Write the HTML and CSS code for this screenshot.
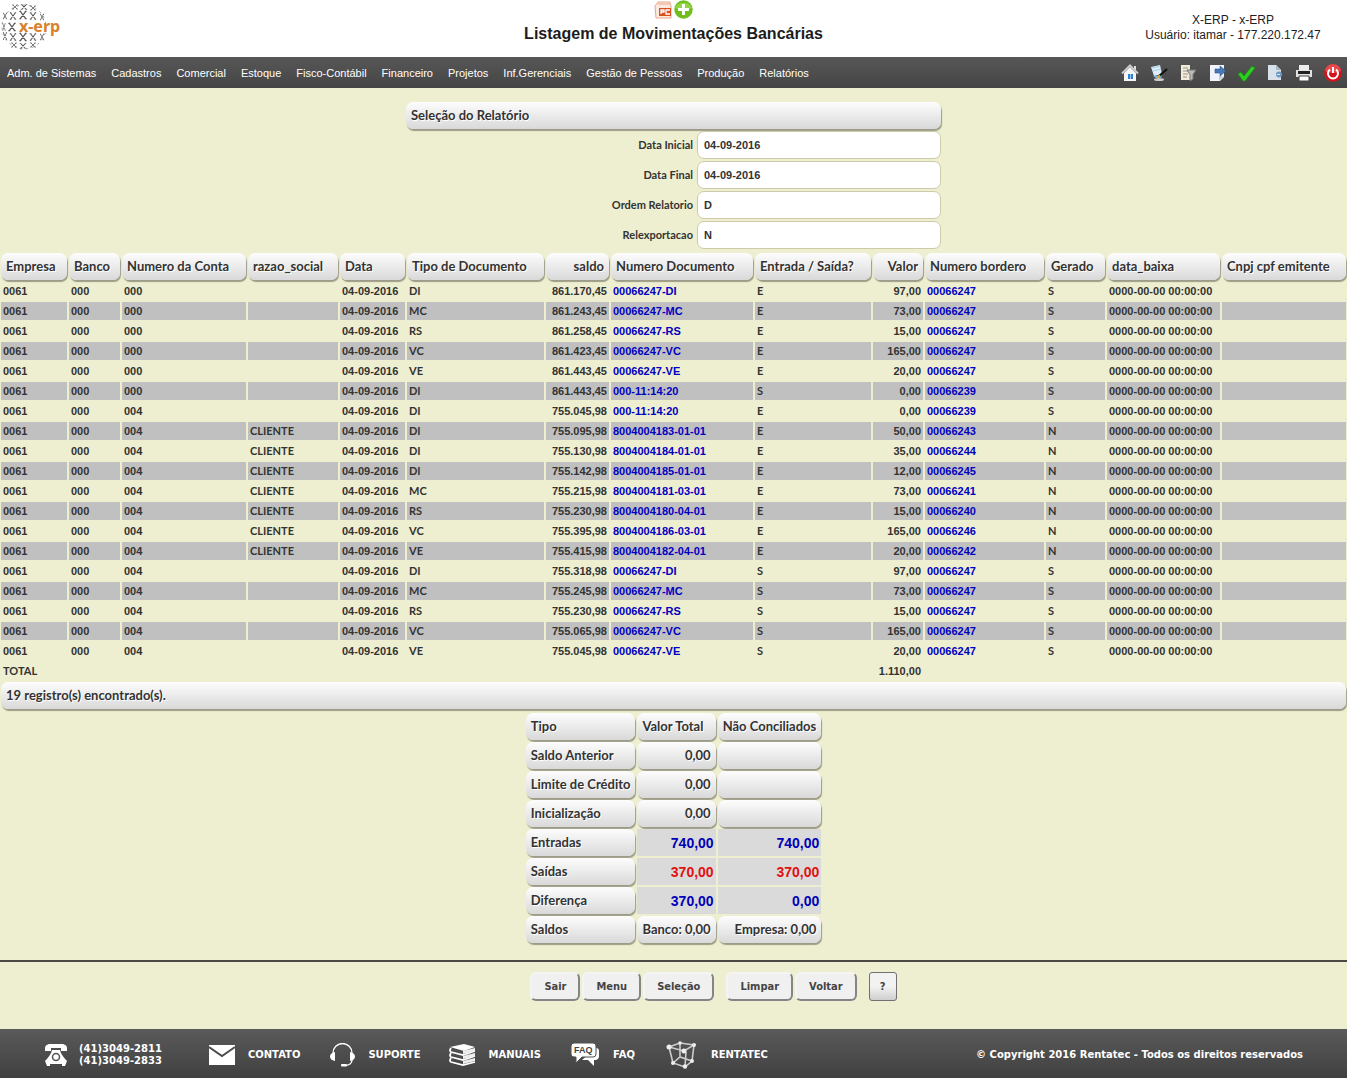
FILE: index.html
```html
<!DOCTYPE html>
<html lang="pt-BR">
<head>
<meta charset="utf-8">
<meta name="viewport" content="width=device-width, initial-scale=1">
<title>Listagem de Movimentações Bancárias</title>
<link rel="stylesheet" href="styles.css">
</head>
<body>
<header class="top">
  <a class="logo" href="#" aria-label="x-erp">
    <svg width="64" height="54" viewBox="0 0 64 54">
      <defs><path id="x" d="M-3-4L3 4M3-4L-3 4M-4-4h2M2-4h2M-4 4h2M2 4h2"/></defs>
      <circle cx="24" cy="27" r="22" fill="none" stroke="#999" stroke-dasharray="2 4"/>
      <g stroke="#555" stroke-width="1.3" fill="none">
        <use href="#x" transform="translate(15 7) scale(.7 .5)"/><use href="#x" transform="translate(24 7) scale(.8 .6)"/><use href="#x" transform="translate(33 8) scale(.7 .5)"/>
        <use href="#x" transform="translate(5 16) scale(.5 .7)"/><use href="#x" transform="translate(13 16) scale(.8)"/><use href="#x" transform="translate(23 15) scale(.9)"/><use href="#x" transform="translate(33 16) scale(.8)"/><use href="#x" transform="translate(42 17) scale(.5 .7)"/>
        <use href="#x" transform="translate(4 27) scale(.4 .8)"/><use href="#x" transform="translate(12 27) scale(.9)"/>
        <use href="#x" transform="translate(5 36) scale(.5 .8)"/><use href="#x" transform="translate(13 37) scale(.8)"/><use href="#x" transform="translate(23 37) scale(.9)"/><use href="#x" transform="translate(33 37) scale(.8)"/><use href="#x" transform="translate(42 37) scale(.5 .7)"/>
        <use href="#x" transform="translate(14 45) scale(.7 .5)"/><use href="#x" transform="translate(23 46) scale(.8 .6)"/><use href="#x" transform="translate(33 45) scale(.7 .5)"/>
      </g>
      <text class="logo-text" x="19" y="32">x-erp</text>
    </svg>
  </a>
  <div class="heading">
    <div class="heading-icons">
      <svg width="19" height="19" viewBox="0 0 19 19"><path d="M2 18L1 6l3-4h12l1 4v12z" fill="#fbe9e0" stroke="#e6a88e"/><path d="M4 3h12v2H4z" fill="#f3c9b6"/><path d="M5 8h12v8H5z" fill="#d9501e"/><path d="M7 14V10h3v2H7m9-2h-4v4h4" fill="none" stroke="#fff" stroke-width="1.3"/></svg>
      <svg width="19" height="19" viewBox="0 0 19 19"><circle cx="9.500" cy="9.500" r="9.200" fill="#6fbe1e"/><path d="M1 8a9 8 0 0 1 17 0q-8 4-17 0z" fill="#93d444"/><path d="M9.500 4v11M4 9.500h11" stroke="#fff" stroke-width="3"/></svg>
    </div>
    <h1>Listagem de Movimentações Bancárias</h1>
  </div>
  <div class="user">X-ERP - x-ERP<br>Usuário: itamar - 177.220.172.47</div>
</header>

<nav class="bar nav">
  <div class="menu">
    <a href="#">Adm. de Sistemas</a><a href="#">Cadastros</a><a href="#">Comercial</a><a href="#">Estoque</a><a href="#">Fisco-Contábil</a><a href="#">Financeiro</a><a href="#">Projetos</a><a href="#">Inf.Gerenciais</a><a href="#">Gestão de Pessoas</a><a href="#">Produção</a><a href="#">Relatórios</a>
  </div>
  <div class="tools">
    <a href="#" aria-label="Início"><svg viewBox="0 0 18 18"><path d="M3 9l6-6 6 6v8H3z" fill="#f5f5f5"/><path d="M13 2h2v5h-2z" fill="#ddd"/><path d="M1 9.500L9 1.500l8 8" fill="none" stroke="#c9c9c9" stroke-width="2"/><path d="M7 10h5v5H7z" fill="#2f7fd0"/><path d="M9.500 10v5" stroke="#9cf"/></svg></a>
    <a href="#" aria-label="Editar"><svg viewBox="0 0 18 18"><path d="M1 3l9-2 2 9-8 2z" fill="#dbeefa"/><path d="M2 4l8-2M3 7l8-2" stroke="#a9cfea"/><path d="M3 12l9-1-1 3H6z" fill="#6db4e4"/><ellipse cx="9" cy="15.500" rx="5" ry="1.500" fill="#ccc"/><path d="M8 13l9-8" stroke="#111" stroke-width="2.200"/><path d="M7 14l3-2.500" stroke="#e2b33c" stroke-width="2"/></svg></a>
    <a href="#" aria-label="Filtrar"><svg viewBox="0 0 18 18"><path d="M2 1h9v15H2z" fill="#f1ecd9"/><path d="M4 4h5M4 7h6M4 10h5M4 13h4" stroke="#9b9480"/><path d="M8 6h9l-3 4.500V15l-3 2v-6.500z" fill="#bbb" stroke="#777"/></svg></a>
    <a href="#" aria-label="Exportar"><svg viewBox="0 0 18 18"><path d="M2 1h14v12l-4 4H2z" fill="#f1f5fb"/><path d="M16 12l-5 5v-5z" fill="#c4cedb"/><path d="M7 5h5V2l6 5-6 5V9H7z" fill="#4878b5" stroke="#2c5590" stroke-width=".6"/></svg></a>
    <a href="#" aria-label="Confirmar"><svg viewBox="0 0 18 18"><path d="M1 10l3-2 3 4L15 2l3 2L8 17H6z" fill="#2bd01e" stroke="#128a10" stroke-width=".6"/></svg></a>
    <a href="#" aria-label="Documento"><svg viewBox="0 0 18 18"><path d="M2 1h8l5 5v10H2z" fill="#d9e1ea"/><path d="M10 1l5 5h-5z" fill="#a9b7c6"/><circle cx="13" cy="10.500" r="3" fill="#6d9ac4"/><path d="M11 10.500h3" stroke="#d7e8f8"/></svg></a>
    <a href="#" aria-label="Imprimir"><svg viewBox="0 0 18 18"><path d="M4 1h10v6H4z" fill="#eee"/><path d="M1 6h16v7H1z" fill="#e2e2e2"/><path d="M3 7h12v3H3z" fill="#222"/><path d="M4 12h10v5H4z" fill="#fff" stroke="#444"/></svg></a>
    <a href="#" aria-label="Sair do sistema"><svg viewBox="0 0 18 18"><circle cx="9" cy="9" r="8.800" fill="#d3131a"/><path d="M1 7a8 7 0 0 1 16 0q-8 4-16 0z" fill="#e8474b"/><path d="M6 5.500a5 5 0 1 0 6 0M9 3v6" fill="none" stroke="#fff" stroke-width="2"/></svg></a>
  </div>
</nav>

<main>
  <form class="filter">
    <h2 class="pill">Seleção do Relatório</h2>
    <div class="field"><label for="di">Data Inicial</label><input id="di" type="text" value="04-09-2016"></div>
    <div class="field"><label for="df">Data Final</label><input id="df" type="text" value="04-09-2016"></div>
    <div class="field"><label for="or">Ordem Relatorio</label><input id="or" type="text" value="D"></div>
    <div class="field"><label for="re">Relexportacao</label><input id="re" type="text" value="N"></div>
  </form>

  <table class="list">
    <colgroup><col class="c66"><col class="c51"><col class="c124"><col class="c90"><col class="c65"><col class="c137"><col class="c63"><col class="c142"><col class="c116"><col class="c50"><col class="c119"><col class="c59"><col class="c113"><col class="c124"></colgroup>
    <thead><tr><th class="pill">Empresa</th><th class="pill">Banco</th><th class="pill">Numero da Conta</th><th class="pill">razao_social</th><th class="pill">Data</th><th class="pill">Tipo de Documento</th><th class="pill">saldo</th><th class="pill">Numero Documento</th><th class="pill">Entrada / Saída?</th><th class="pill">Valor</th><th class="pill">Numero bordero</th><th class="pill">Gerado</th><th class="pill">data_baixa</th><th class="pill">Cnpj cpf emitente</th></tr></thead>
    <tbody>
      <tr><td>0061</td><td>000</td><td>000</td><td></td><td>04-09-2016</td><td>DI</td><td>861.170,45</td><td><a href="#">00066247-DI</a></td><td>E</td><td>97,00</td><td><a href="#">00066247</a></td><td>S</td><td>0000-00-00 00:00:00</td><td></td></tr>
      <tr><td>0061</td><td>000</td><td>000</td><td></td><td>04-09-2016</td><td>MC</td><td>861.243,45</td><td><a href="#">00066247-MC</a></td><td>E</td><td>73,00</td><td><a href="#">00066247</a></td><td>S</td><td>0000-00-00 00:00:00</td><td></td></tr>
      <tr><td>0061</td><td>000</td><td>000</td><td></td><td>04-09-2016</td><td>RS</td><td>861.258,45</td><td><a href="#">00066247-RS</a></td><td>E</td><td>15,00</td><td><a href="#">00066247</a></td><td>S</td><td>0000-00-00 00:00:00</td><td></td></tr>
      <tr><td>0061</td><td>000</td><td>000</td><td></td><td>04-09-2016</td><td>VC</td><td>861.423,45</td><td><a href="#">00066247-VC</a></td><td>E</td><td>165,00</td><td><a href="#">00066247</a></td><td>S</td><td>0000-00-00 00:00:00</td><td></td></tr>
      <tr><td>0061</td><td>000</td><td>000</td><td></td><td>04-09-2016</td><td>VE</td><td>861.443,45</td><td><a href="#">00066247-VE</a></td><td>E</td><td>20,00</td><td><a href="#">00066247</a></td><td>S</td><td>0000-00-00 00:00:00</td><td></td></tr>
      <tr><td>0061</td><td>000</td><td>000</td><td></td><td>04-09-2016</td><td>DI</td><td>861.443,45</td><td><a href="#">000-11:14:20</a></td><td>S</td><td>0,00</td><td><a href="#">00066239</a></td><td>S</td><td>0000-00-00 00:00:00</td><td></td></tr>
      <tr><td>0061</td><td>000</td><td>004</td><td></td><td>04-09-2016</td><td>DI</td><td>755.045,98</td><td><a href="#">000-11:14:20</a></td><td>E</td><td>0,00</td><td><a href="#">00066239</a></td><td>S</td><td>0000-00-00 00:00:00</td><td></td></tr>
      <tr><td>0061</td><td>000</td><td>004</td><td>CLIENTE</td><td>04-09-2016</td><td>DI</td><td>755.095,98</td><td><a href="#">8004004183-01-01</a></td><td>E</td><td>50,00</td><td><a href="#">00066243</a></td><td>N</td><td>0000-00-00 00:00:00</td><td></td></tr>
      <tr><td>0061</td><td>000</td><td>004</td><td>CLIENTE</td><td>04-09-2016</td><td>DI</td><td>755.130,98</td><td><a href="#">8004004184-01-01</a></td><td>E</td><td>35,00</td><td><a href="#">00066244</a></td><td>N</td><td>0000-00-00 00:00:00</td><td></td></tr>
      <tr><td>0061</td><td>000</td><td>004</td><td>CLIENTE</td><td>04-09-2016</td><td>DI</td><td>755.142,98</td><td><a href="#">8004004185-01-01</a></td><td>E</td><td>12,00</td><td><a href="#">00066245</a></td><td>N</td><td>0000-00-00 00:00:00</td><td></td></tr>
      <tr><td>0061</td><td>000</td><td>004</td><td>CLIENTE</td><td>04-09-2016</td><td>MC</td><td>755.215,98</td><td><a href="#">8004004181-03-01</a></td><td>E</td><td>73,00</td><td><a href="#">00066241</a></td><td>N</td><td>0000-00-00 00:00:00</td><td></td></tr>
      <tr><td>0061</td><td>000</td><td>004</td><td>CLIENTE</td><td>04-09-2016</td><td>RS</td><td>755.230,98</td><td><a href="#">8004004180-04-01</a></td><td>E</td><td>15,00</td><td><a href="#">00066240</a></td><td>N</td><td>0000-00-00 00:00:00</td><td></td></tr>
      <tr><td>0061</td><td>000</td><td>004</td><td>CLIENTE</td><td>04-09-2016</td><td>VC</td><td>755.395,98</td><td><a href="#">8004004186-03-01</a></td><td>E</td><td>165,00</td><td><a href="#">00066246</a></td><td>N</td><td>0000-00-00 00:00:00</td><td></td></tr>
      <tr><td>0061</td><td>000</td><td>004</td><td>CLIENTE</td><td>04-09-2016</td><td>VE</td><td>755.415,98</td><td><a href="#">8004004182-04-01</a></td><td>E</td><td>20,00</td><td><a href="#">00066242</a></td><td>N</td><td>0000-00-00 00:00:00</td><td></td></tr>
      <tr><td>0061</td><td>000</td><td>004</td><td></td><td>04-09-2016</td><td>DI</td><td>755.318,98</td><td><a href="#">00066247-DI</a></td><td>S</td><td>97,00</td><td><a href="#">00066247</a></td><td>S</td><td>0000-00-00 00:00:00</td><td></td></tr>
      <tr><td>0061</td><td>000</td><td>004</td><td></td><td>04-09-2016</td><td>MC</td><td>755.245,98</td><td><a href="#">00066247-MC</a></td><td>S</td><td>73,00</td><td><a href="#">00066247</a></td><td>S</td><td>0000-00-00 00:00:00</td><td></td></tr>
      <tr><td>0061</td><td>000</td><td>004</td><td></td><td>04-09-2016</td><td>RS</td><td>755.230,98</td><td><a href="#">00066247-RS</a></td><td>S</td><td>15,00</td><td><a href="#">00066247</a></td><td>S</td><td>0000-00-00 00:00:00</td><td></td></tr>
      <tr><td>0061</td><td>000</td><td>004</td><td></td><td>04-09-2016</td><td>VC</td><td>755.065,98</td><td><a href="#">00066247-VC</a></td><td>S</td><td>165,00</td><td><a href="#">00066247</a></td><td>S</td><td>0000-00-00 00:00:00</td><td></td></tr>
      <tr><td>0061</td><td>000</td><td>004</td><td></td><td>04-09-2016</td><td>VE</td><td>755.045,98</td><td><a href="#">00066247-VE</a></td><td>S</td><td>20,00</td><td><a href="#">00066247</a></td><td>S</td><td>0000-00-00 00:00:00</td><td></td></tr>
    </tbody>
    <tfoot><tr><td class="total">TOTAL</td><td></td><td></td><td></td><td></td><td></td><td></td><td></td><td></td><td>1.110,00</td><td></td><td></td><td></td><td></td></tr></tfoot>
  </table>
  <p class="pill found">19 registro(s) encontrado(s).</p>

  <table class="summary">
    <thead><tr><th class="pill">Tipo</th><th class="pill">Valor Total</th><th class="pill">Não Conciliados</th></tr></thead>
    <tbody>
      <tr><th class="pill">Saldo Anterior</th><td class="pill">0,00</td><td class="pill"></td></tr>
      <tr><th class="pill">Limite de Crédito</th><td class="pill">0,00</td><td class="pill"></td></tr>
      <tr><th class="pill">Inicialização</th><td class="pill">0,00</td><td class="pill"></td></tr>
      <tr><th class="pill">Entradas</th><td class="sum">740,00</td><td class="sum">740,00</td></tr>
      <tr><th class="pill">Saídas</th><td class="sum out">370,00</td><td class="sum out">370,00</td></tr>
      <tr><th class="pill">Diferença</th><td class="sum">370,00</td><td class="sum">0,00</td></tr>
      <tr><th class="pill">Saldos</th><td class="pill">Banco: 0,00</td><td class="pill">Empresa: 0,00</td></tr>
    </tbody>
  </table>

  <div class="actions">
    <div class="group"><button type="button">Sair</button><button type="button">Menu</button><button type="button">Seleção</button></div>
    <div class="group"><button type="button">Limpar</button><button type="button">Voltar</button></div>
    <button type="button" class="help">?</button>
  </div>
</main>

<footer class="bar foot">
  <div class="links">
    <div class="item phone"><svg width="28" height="24" viewBox="0 0 28 24"><path d="M5 8V5q0-3 4-4h14q4 1 4 4v3h-6V5H11v3z" fill="#fff"/><path d="M12 7h8q1 5 7 11l-2 5h-3v-2H10v2H7l-2-5q6-6 7-11z" fill="#fff"/><circle cx="16" cy="14" r="3.500" fill="#fff" stroke="#555" stroke-width="1.500"/></svg><span>(41)3049-2811<br>(41)3049-2833</span></div>
    <a class="item" href="#"><svg width="28" height="24" viewBox="0 0 28 24"><path d="M0 2h26v20H0z" fill="#fff"/><path d="M0 4l13 9 13-9" fill="none" stroke="#4c4c4c" stroke-width="2"/></svg>CONTATO</a>
    <a class="item" href="#"><svg width="28" height="24" viewBox="0 0 28 24"><path d="M4 10a9 9 0 0 1 19 0M23 17q0 5-7 5.500" fill="none" stroke="#fff" stroke-width="1.300"/><path d="M6 9v9q-5-1-5-4.500T6 9zM21 9v9q5-1 5-4.500T21 9z" fill="#fff"/><rect x="12" y="21" width="6" height="2.500" rx="1" fill="#fff"/></svg>SUPORTE</a>
    <a class="item" href="#"><svg width="28" height="24" viewBox="0 0 28 24"><path d="M1 4l14-3 11 3-11 4z" fill="#fff"/><g fill="none" stroke="#fff" stroke-width="1.800"><path d="M2 5q-2 3 0 4l12 3 12-4M2 10q-2 3 0 4l12 3 12-4M2 15q-2 3 0 4l12 3 12-3"/></g><path d="M14 8l12-3v3l-12 3zM14 13l12-3v3l-12 3zM14 18l12-3v3l-12 3z" fill="#eee"/></svg>MANUAIS</a>
    <a class="item" href="#"><svg width="32" height="26" viewBox="0 0 32 26"><path d="M26 6q3 0 3 3v5q0 3-3 4h-2v6l-6-6h-6z" fill="#fff"/><path d="M4 1h19q3 0 3 3v8q0 3-3 3H12l-6 6v-6H4q-3 0-3-3V4q0-3 3-3z" fill="#fff" stroke="#505050"/><text class="faq" x="4" y="11">FAQ</text></svg>FAQ</a>
    <a class="item" href="#"><svg width="36" height="28" viewBox="0 0 36 28"><g fill="none" stroke="#ccc" stroke-width="1.600"><path d="M5 6l15 4 10-6-14-2zM5 6l4 16 12 4 1-15M21 26l7-6 2-16M9 22l7-6 12 4M16 2v14"/></g><g fill="#eee"><circle cx="5" cy="6" r="2.500"/><circle cx="20" cy="10" r="2.500"/><circle cx="30" cy="4" r="2"/><circle cx="16" cy="2" r="1.800"/><circle cx="9" cy="22" r="2"/><circle cx="21" cy="25.500" r="2.200"/><circle cx="28" cy="20" r="2"/></g></svg>RENTATEC</a>
  </div>
  <div>© Copyright 2016 Rentatec - Todos os direitos reservados</div>
</footer>
</body>
</html>
```

FILE: styles.css
```css
* { box-sizing: border-box; }
body {
  margin: 0;
  min-height: 100vh;
  display: flex;
  flex-direction: column;
  overflow-x: hidden;
  background: #eeeed0;
  color: #333;
  font-family: "Liberation Sans", Arial, sans-serif;
  font-size: 12px;
}
a { text-decoration: none; color: inherit; }
svg { display: block; flex: none; }

.top {
  display: grid;
  grid-template-columns: 228px 1fr 228px;
  height: 57px;
  background: #fff;
}
.logo-text { font: bold 16px "Noto Sans", sans-serif; fill: #d8812c; }
.heading { display: flex; flex-direction: column; align-items: center; }
.heading-icons { display: flex; gap: 1px; }
h1 { margin: 5px 0 0; font-size: 16px; line-height: 20px; color: #1c1c1c; }
.user { padding-top: 13px; text-align: center; line-height: 15px; color: #222; }

.bar {
  display: flex;
  align-items: center;
  justify-content: space-between;
  color: #fff;
}
.nav {
  min-height: 31px;
  padding: 0 5px 0 7px;
  background: linear-gradient(#575757, #454545);
  font-size: 11px;
}
.menu { display: flex; gap: 15px; }
.tools { display: flex; gap: 11px; }
.tools svg { width: 18px; height: 18px; }

main { flex: 1; }
.pill {
  height: 27px;
  padding: 0 5px;
  border-radius: 7px;
  background: linear-gradient(#fdfdfd, #d9d9d9);
  box-shadow: 1px 2px 1px #9c9c88;
  color: #333;
  font: bold 13px/27px Lato, sans-serif;
  text-shadow: 1px 1px 0 #fff;
  text-align: left;
  white-space: nowrap;
}
.filter { max-width: 535px; margin: 14px auto 0; }
.filter h2 { margin: 0; }
.field {
  display: grid;
  grid-template-columns: 1fr 244px;
  align-items: center;
  gap: 4px;
  height: 28px;
  margin-top: 2px;
}
.field label { text-align: right; font: bold 11px/14px Lato, sans-serif; }
.field input {
  height: 28px;
  padding: 0 6px;
  border: 1px solid #cdcba8;
  border-radius: 7px;
  background: #fff;
  color: #333;
  font: bold 11px "Liberation Sans", sans-serif;
}

.list {
  table-layout: fixed;
  width: calc(100% + 2px);
  margin: 2px -1px 0;
  border-spacing: 2px;
}
.c50 { width: 50px; }
.c51 { width: 51px; }
.c59 { width: 59px; }
.c63 { width: 63px; }
.c65 { width: 65px; }
.c66 { width: 66px; }
.c90 { width: 90px; }
.c113 { width: 113px; }
.c116 { width: 116px; }
.c119 { width: 119px; }
.c124 { width: 124px; }
.c137 { width: 137px; }
.c142 { width: 142px; }
.list td {
  height: 18px;
  padding: 0 2px;
  font-weight: bold;
  font-size: 11px;
  line-height: 18px;
  white-space: nowrap;
}
.list tbody tr:nth-child(even) td { background: #c0c0c0; }
.list td:nth-child(4), .list td:nth-child(6), .list td:nth-child(9), .list td:nth-child(12), .list .total { font-family: Lato, sans-serif; }
.list th:nth-child(7), .list th:nth-child(10), .list td:nth-child(7), .list td:nth-child(10) { text-align: right; }
.list a { color: #0000c0; }
.found { margin: 0 1px; }

.summary { margin: 2px auto 0; border-spacing: 2px; }
.summary td { text-align: right; }
.summary .sum {
  padding: 0 2px;
  background: #dadada;
  color: #0000b8;
  font-weight: bold;
  font-size: 14px;
}
.summary .out { color: #e01010; }

.actions {
  display: flex;
  justify-content: center;
  gap: 12px;
  margin-top: 15px;
  padding: 10px 0 28px 80px;
  border-top: 2px solid #4a4a42;
}
.group { display: flex; gap: 2px; }
button {
  height: 29px;
  padding: 0 12px;
  border: 2px solid;
  border-color: #f4f4f4 #858585 #858585 #f4f4f4;
  border-radius: 6px;
  background: #f0f0f0;
  color: #444;
  font: bold 11px "DejaVu Sans Condensed", "DejaVu Sans", sans-serif;
}
.help {
  width: 28px;
  padding: 0;
  border: 1px solid #707070;
  border-radius: 3px;
  background: linear-gradient(#f2f2f2 50%, #cfcfcf);
}

.foot {
  min-height: 49px;
  padding: 2px 44px 0 40px;
  background: linear-gradient(#5a5a5a, #404040);
  font: bold 10px/12px "DejaVu Sans", sans-serif;
}
.links { display: flex; align-items: center; gap: 29px; }
.item { display: flex; align-items: center; gap: 11px; }
.phone { margin-right: 18px; }
.faq { font: bold 9px "Liberation Sans", sans-serif; fill: #444; }
```
